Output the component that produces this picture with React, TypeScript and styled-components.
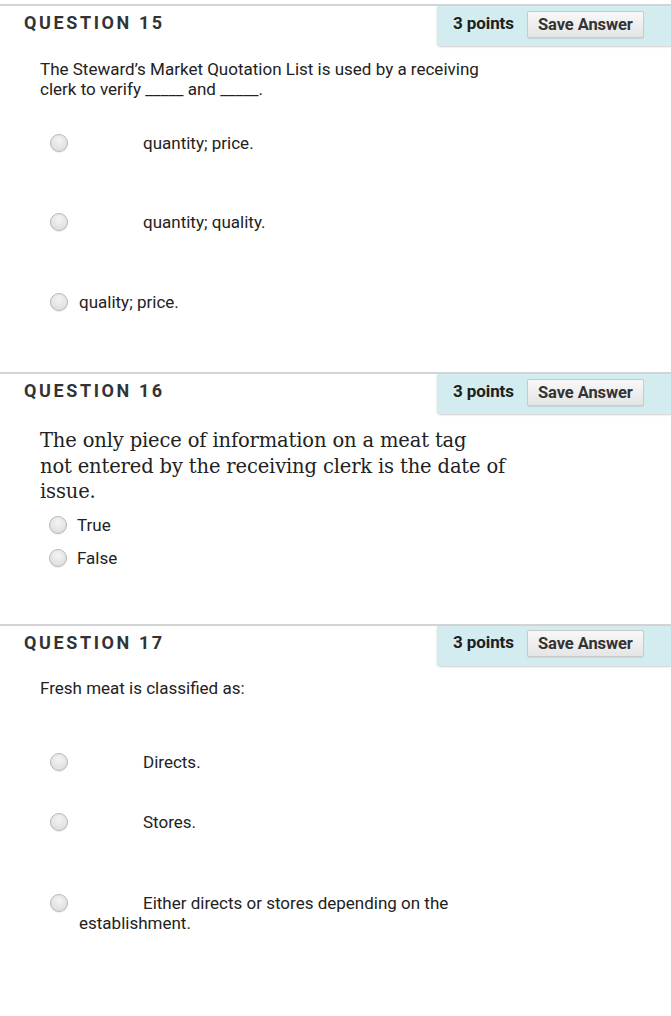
import React from 'react';
import styled, {createGlobalStyle} from 'styled-components';

const GlobalStyle = createGlobalStyle`
  html, body {
    margin: 0;
    padding: 0;
    background: #ffffff;
  }
  body {
    font-family: Roboto, "Liberation Sans", Arial, sans-serif;
    color: #222222;
  }
`

type Option = {text: string, indent?: number}

type Question = {
    number: number
    text: string
    serif?: boolean
    textGap: number
    options: Option[]
    gaps: number[]
    bottom: number
}

const questions: Question[] = [
    {
        number: 15,
        text: 'The Steward\u2019s Market Quotation List is used by a receiving clerk to verify _____ and _____.',
        textGap: 13,
        options: [
            {text: 'quantity; price.', indent: 64},
            {text: 'quantity; quality.', indent: 64},
            {text: 'quality; price.'},
        ],
        gaps: [34, 59, 60],
        bottom: 60,
    },
    {
        number: 16,
        text: 'The only piece of information on a meat tag\nnot entered by the receiving clerk is the date of\nissue.',
        serif: true,
        textGap: 14,
        options: [
            {text: 'True'},
            {text: 'False'},
        ],
        gaps: [10, 13],
        bottom: 56,
    },
    {
        number: 17,
        text: 'Fresh meat is classified as:',
        textGap: 12,
        options: [
            {text: 'Directs.', indent: 64},
            {text: 'Stores.', indent: 64},
            {text: 'Either directs or stores depending on the establishment.', indent: 64},
        ],
        gaps: [54, 40, 61],
        bottom: 80,
    },
]

export default function App() {
    return (
        <Page>
            <GlobalStyle/>
            {questions.map(q => (
                <Section key={q.number} $bottom={q.bottom}>
                    <Header>
                        <Title>QUESTION {q.number}</Title>
                        <PointsBox>
                            <Points>3 points</Points>
                            <SaveButton>Save Answer</SaveButton>
                        </PointsBox>
                    </Header>
                    <QuestionText $serif={q.serif} $gap={q.textGap}>
                        {q.text}
                    </QuestionText>
                    {q.options.map((o, i) => (
                        <OptionRow key={o.text} $gap={q.gaps[i]} $tight={q.serif}>
                            <Radio/>
                            <OptionLabel $indent={o.indent || 0}>{o.text}</OptionLabel>
                        </OptionRow>
                    ))}
                </Section>
            ))}
        </Page>
    );
}

const Page = styled.div`
  padding-top: 4px;
  width: 671px;
`

const Section = styled.section<{ $bottom: number }>`
  border-top: 2px solid #d4d4d4;
  padding-bottom: ${p => p.$bottom}px;
`

const Header = styled.div`
  display: flex;
  justify-content: space-between;
  align-items: flex-start;
  height: 40px;
`

const Title = styled.h2`
  margin: 6px 0 0 24px;
  font-family: Roboto, "Liberation Sans", sans-serif;
  font-size: 18px;
  font-weight: 700;
  letter-spacing: 2.6px;
  color: #333333;
  line-height: 22px;
`

const PointsBox = styled.div`
  width: 234px;
  height: 40px;
  box-sizing: border-box;
  display: flex;
  align-items: center;
  gap: 13px;
  padding: 0 0 4px 16px;
  background: #d3ecef;
  border-bottom-left-radius: 4px;
  box-shadow: 0 1px 2px rgba(0, 0, 0, 0.2);
`

const Points = styled.span`
  font-size: 17px;
  font-weight: 700;
  color: #1e1e1e;
  letter-spacing: -0.1px;
  margin-top: -3px;
`

const SaveButton = styled.button`
  width: 117px;
  height: 27px;
  padding: 0;
  border: 1px solid #cacaca;
  border-radius: 2px;
  background: linear-gradient(#f8f8f8, #e5e5e5);
  box-shadow: 0 1px 1px rgba(0, 0, 0, 0.08);
  font-family: Roboto, "Liberation Sans", sans-serif;
  font-size: 16.5px;
  font-weight: 700;
  color: #333333;
  letter-spacing: -0.1px;
`

const QuestionText = styled.p<{ $serif?: boolean, $gap: number }>`
  margin: ${p => p.$gap}px 0 0 40px;
  max-width: ${p => p.$serif ? 600 : 470}px;
  white-space: pre-line;
  font-family: ${p => p.$serif ? '"DejaVu Serif", "Liberation Serif", serif' : 'Roboto, "Liberation Sans", sans-serif'};
  font-size: ${p => p.$serif ? 19.5 : 17}px;
  line-height: ${p => p.$serif ? 25.5 : 20}px;
  letter-spacing: ${p => p.$serif ? -0.15 : 0}px;
  color: #222222;
`

const OptionRow = styled.div<{ $gap: number, $tight?: boolean }>`
  display: flex;
  align-items: flex-start;
  margin: ${p => p.$gap}px 0 0 ${p => p.$tight ? 49 : 50}px;
  gap: ${p => p.$tight ? 10 : 11}px;
`

const Radio = styled.span`
  flex: none;
  width: 16px;
  height: 16px;
  margin-top: 1px;
  border-radius: 50%;
  border: 1px solid #b8b8b8;
  background: radial-gradient(circle at 50% 35%, #f4f4f4, #d8d8d8);
  box-shadow: 0 1px 1px rgba(0, 0, 0, 0.08);
`

const OptionLabel = styled.div<{ $indent: number }>`
  width: 400px;
  text-indent: ${p => p.$indent}px;
  font-size: 17px;
  line-height: 20px;
  color: #222222;
`
